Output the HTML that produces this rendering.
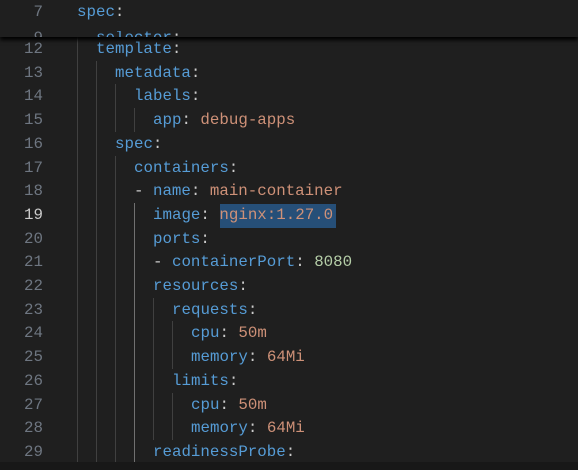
<!DOCTYPE html>
<html><head><style>
html,body{margin:0;padding:0;background:#1f1f1f;width:578px;height:470px;overflow:hidden;position:relative}
.r{position:absolute;left:0;height:24px;line-height:24px;font-family:"Liberation Mono",monospace;font-size:15.8px;white-space:pre;width:578px}
.n{position:absolute;right:535px;color:#6e7681;}
.t{position:absolute}
.k{color:#569cd6}.p{color:#cccccc}.s{color:#ce9178}.d{color:#b5cea8}
.g{position:absolute;top:0;width:1px;height:24px;background:#404040}
.sel{position:absolute;left:220px;top:204px;width:116px;height:24px;background:#264f78}
#sticky{position:absolute;left:0;top:0;width:578px;height:37px;background:#1f1f1f;overflow:hidden;box-shadow:0 3px 4px #000;z-index:2}
#bot{position:absolute;left:0;top:462px;width:578px;height:8px;background:#181818;z-index:3}
</style></head><body>
<div id="sticky">
<div class="r" style="top:26px"><span class="n">9</span><span class="t k" style="left:96px">selector<span class="p">:</span></span></div>
<div class="r" style="top:0;height:31px;background:#1f1f1f"><span class="n">7</span><span class="t k" style="left:77px">spec<span class="p">:</span></span></div>
</div>
<div class="sel"></div>
<div id="lines"></div>
<div id="bot"></div>
<script>
var L=[[12,1,'<span class="k">template</span><span class="p">:</span>'],
[13,2,'<span class="k">metadata</span><span class="p">:</span>'],
[14,3,'<span class="k">labels</span><span class="p">:</span>'],
[15,4,'<span class="k">app</span><span class="p">: </span><span class="s">debug-apps</span>'],
[16,2,'<span class="k">spec</span><span class="p">:</span>'],
[17,3,'<span class="k">containers</span><span class="p">:</span>'],
[18,3,'<span class="p">- </span><span class="k">name</span><span class="p">: </span><span class="s">main-container</span>'],
[19,4,'<span class="k">image</span><span class="p">: </span><span class="s">nginx:1.27.0</span>'],
[20,4,'<span class="k">ports</span><span class="p">:</span>'],
[21,4,'<span class="p">- </span><span class="k">containerPort</span><span class="p">: </span><span class="d">8080</span>'],
[22,4,'<span class="k">resources</span><span class="p">:</span>'],
[23,5,'<span class="k">requests</span><span class="p">:</span>'],
[24,6,'<span class="k">cpu</span><span class="p">: </span><span class="s">50m</span>'],
[25,6,'<span class="k">memory</span><span class="p">: </span><span class="s">64Mi</span>'],
[26,5,'<span class="k">limits</span><span class="p">:</span>'],
[27,6,'<span class="k">cpu</span><span class="p">: </span><span class="s">50m</span>'],
[28,6,'<span class="k">memory</span><span class="p">: </span><span class="s">64Mi</span>'],
[29,4,'<span class="k">readinessProbe</span><span class="p">:</span>']];
var h='';
L.forEach(function(l,i){var top=37+i*23.7;var g='';
for(var j=0;j<l[1];j++){var c=(j==3&&l[0]>=19)?'#707070':'#404040';g+='<span class="g" style="left:'+(77+19*j)+'px;background:'+c+'"></span>';}
h+='<div class="r" style="top:'+top+'px">'+g+'<span class="n" style="color:'+(l[0]==19?'#cccccc':'#6e7681')+'">'+l[0]+'</span><span class="t" style="left:'+(77+19*l[1])+'px">'+l[2]+'</span></div>';});
document.getElementById('lines').innerHTML=h;
</script>
</body></html>
